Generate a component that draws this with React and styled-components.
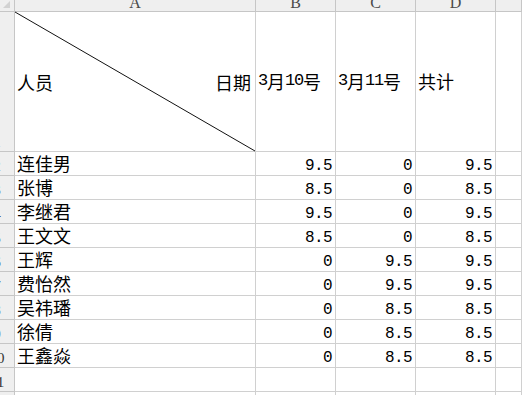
import React from 'react'
import styled, { createGlobalStyle } from 'styled-components'

const GlobalStyle = createGlobalStyle`
  html, body {
    margin: 0;
    padding: 0;
    background: #fff;
    overflow: hidden;
  }
  body {
    font-family: "Noto Sans CJK SC", sans-serif;
    color: #000;
  }
`

const Sheet = styled.div`
  display: grid;
  grid-template-columns: 15px 241px 80px 80px 80px 1fr;
  grid-template-rows: 12px 140px repeat(11, 24px);
  width: 522px;
  height: 395px;
  overflow: hidden;
`

const Cell = styled.div`
  box-sizing: border-box;
  position: relative;
  min-width: 0;
  display: flex;
  align-items: ${p => (p.$middle ? 'center' : 'flex-end')};
  justify-content: ${p => (p.$right ? 'flex-end' : 'flex-start')};
  padding: ${p => (p.$right ? '0 3px 0 0' : '0 0 1px 2px')};
  border-right: 1px solid #d0d0d0;
  border-bottom: 1px solid #d0d0d0;
  font-size: 18px;
  line-height: 22px;
  white-space: nowrap;
`

const SplitCell = styled(Cell)`
  justify-content: space-between;
  padding: 0 4px 0 2px;
`

const NumCell = styled(Cell)`
  font-family: "Liberation Mono", monospace;
  font-size: 16px;
  letter-spacing: -0.6px;
  line-height: 18px;
  padding-bottom: 0;
`

const Num = styled.span`
  font-family: "Liberation Mono", monospace;
  font-size: 17px;
  letter-spacing: -1.2px;
`

const ColHead = styled.div`
  box-sizing: border-box;
  position: relative;
  display: flex;
  justify-content: center;
  align-items: flex-end;
  overflow: hidden;
  background: #efefef;
  border-right: 1px solid #c6c6c6;
  border-bottom: 1px solid #c6c6c6;
  font-family: "Liberation Serif", serif;
  font-size: 16px;
  line-height: 16px;
  color: #4a4a4a;
`

// the row number column is cut by the window's left edge, so only the right
// side of each number shows
const RowHead = styled(ColHead)`
  justify-content: flex-start;
  padding-bottom: 1px;
  font-size: 15px;
  color: #333;
`

const RowLabel = styled.span`
  flex: none;
  width: 30px;
  margin-left: -18px;
  text-align: center;
`

const Corner = styled.svg`
  position: absolute;
  left: 0;
  top: 0;
`

const Diagonal = styled.svg`
  position: absolute;
  left: 0;
  top: 0;
  width: 100%;
  height: 100%;
  overflow: visible;
  pointer-events: none;
`

const rows = [
  ['连佳男', 9.5, 0, 9.5],
  ['张博', 8.5, 0, 8.5],
  ['李继君', 9.5, 0, 9.5],
  ['王文文', 8.5, 0, 8.5],
  ['王辉', 0, 9.5, 9.5],
  ['费怡然', 0, 9.5, 9.5],
  ['吴祎璠', 0, 8.5, 8.5],
  ['徐倩', 0, 8.5, 8.5],
  ['王鑫焱', 0, 8.5, 8.5],
]

export default function App() {
  return (
    <>
      <GlobalStyle />
      <Sheet>
        <ColHead>
          <Corner width="14" height="11">
            <polygon points="10,1 10,8 3,8" fill="#d2d2d2" />
          </Corner>
        </ColHead>
        {['A', 'B', 'C', 'D', ''].map((l, i) => (
          <ColHead key={i}>{l}</ColHead>
        ))}

        <RowHead><RowLabel>1</RowLabel></RowHead>
        <SplitCell $middle>
          <span>人员</span>
          <span>日期</span>
          <Diagonal>
            <line x1="0" y1="0" x2="100%" y2="100%" stroke="#111" strokeWidth="1" />
          </Diagonal>
        </SplitCell>
        <Cell $middle><Num>3</Num>月<Num>10</Num>号</Cell>
        <Cell $middle><Num>3</Num>月<Num>11</Num>号</Cell>
        <Cell $middle>共计</Cell>
        <Cell />

        {rows.map(([name, a, b, total], i) => (
          <React.Fragment key={name}>
            <RowHead><RowLabel>{i + 2}</RowLabel></RowHead>
            <Cell>{name}</Cell>
            <NumCell $right>{a}</NumCell>
            <NumCell $right>{b}</NumCell>
            <NumCell $right>{total}</NumCell>
            <Cell />
          </React.Fragment>
        ))}

        {[11, 12].map(n => (
          <React.Fragment key={n}>
            <RowHead><RowLabel>{n}</RowLabel></RowHead>
            <Cell />
            <Cell />
            <Cell />
            <Cell />
            <Cell />
          </React.Fragment>
        ))}
      </Sheet>
    </>
  )
}
